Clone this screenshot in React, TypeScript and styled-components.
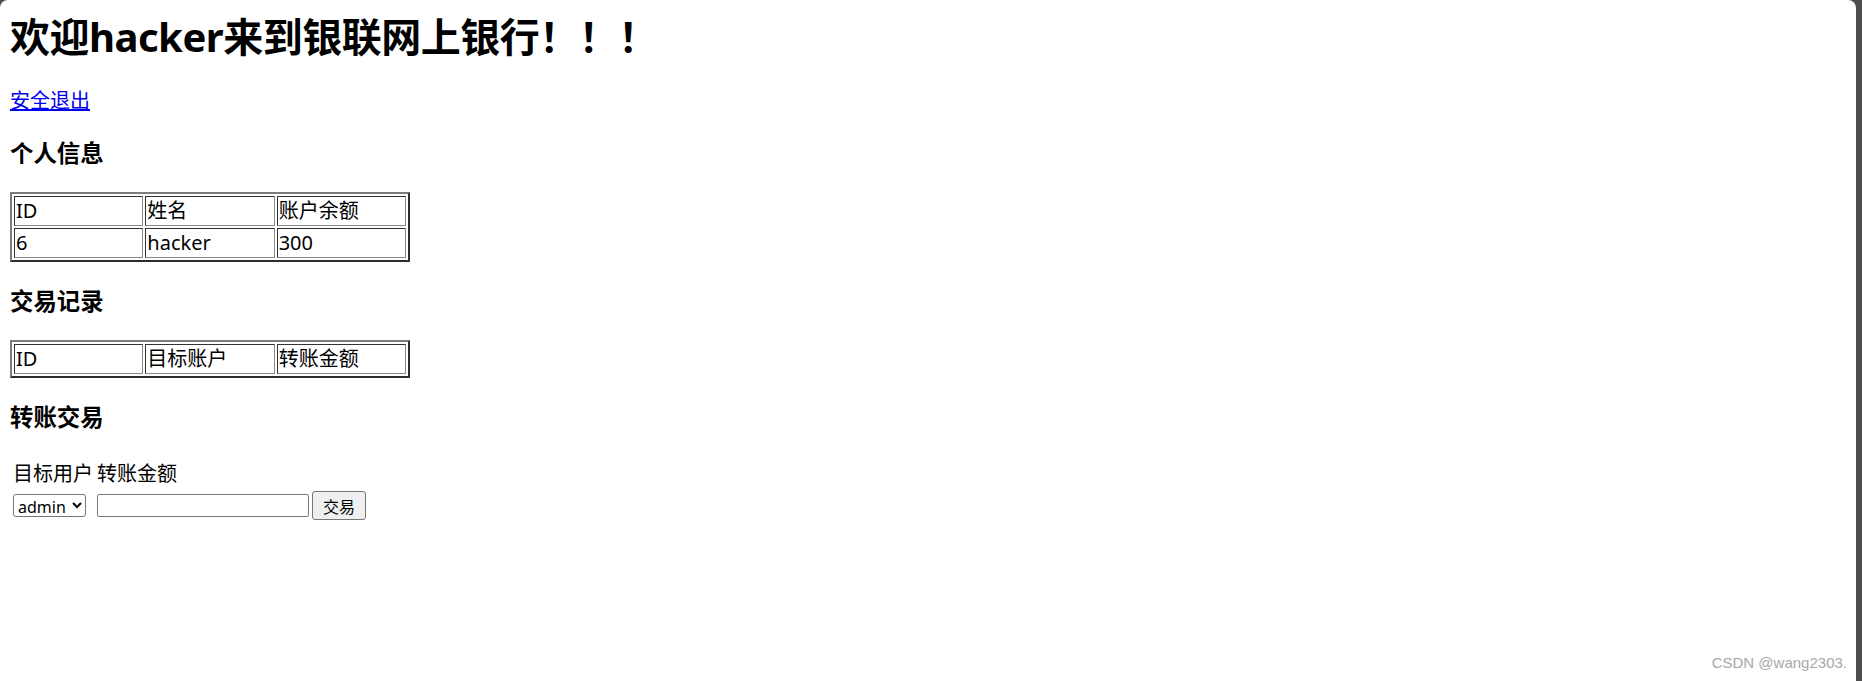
import React from "react";
import styled, { createGlobalStyle } from "styled-components";

const GlobalStyle = createGlobalStyle`
  html, body {
    margin: 0;
    padding: 0;
    height: 100%;
  }
  body {
    background: #4d4d4d;
    font-family: "Noto Sans", "Noto Sans CJK SC", sans-serif;
    color: #000;
  }
`;

const Frame = styled.div`
  position: relative;
  box-sizing: border-box;
  width: calc(100% - 6px);
  height: 100vh;
  padding: 1px 10px 0;
  background: #fff;
  border-radius: 8px 8px 0 0;
  overflow: hidden;
`;

const Title = styled.h1`
  margin: 10px 0 0;
  font-size: 40px;
  line-height: 52px;
  font-weight: 700;
  letter-spacing: -0.5px;
`;

const LogoutLine = styled.p`
  margin: 25px 0 0;
  font-size: 20px;
  line-height: 26px;
`;

const LogoutLink = styled.a`
  color: #0000ee;
  text-decoration: underline;
`;

const SectionTitle = styled.h3`
  margin: 23.5px 0;
  font-size: 23.4px;
  line-height: 31px;
  font-weight: 700;
`;

const DataTable = styled.table`
  width: 400px;
  table-layout: fixed;
  border-collapse: separate;
  border-spacing: 2px;
  border: 2px solid;
  border-color: #7c7c7c #2e2e2e #2e2e2e #7c7c7c;
`;

const DataCell = styled.td`
  border: 1px solid;
  border-color: #333 #8a8a8a #8a8a8a #333;
  padding: 1px;
  font-size: 20px;
  line-height: 26px;
  white-space: nowrap;
`;

const TransferForm = styled.form`
  padding-top: 2px;
`;

const FormTable = styled.table`
  border-collapse: separate;
  border-spacing: 2px;
`;

const FormCell = styled.td<{ $tight?: boolean }>`
  padding: ${(p) => (p.$tight ? "1px 1px 1px 0" : "1px")};
  font-size: 20px;
  line-height: 26px;
  vertical-align: middle;
  white-space: nowrap;
`;

const UserSelect = styled.select`
  box-sizing: border-box;
  width: 73px;
  height: 23px;
  margin: 0;
  font-family: "Noto Sans", sans-serif;
  font-size: 16px;
  border: 1px solid #767676;
  border-radius: 3px;
  background: #fff;
  color: #000;
  display: block;
`;

const AmountInput = styled.input`
  box-sizing: border-box;
  width: 212px;
  height: 23px;
  margin: 0;
  border: 1px solid #767676;
  border-radius: 2px;
  font-size: 16px;
  display: block;
`;

const SubmitButton = styled.button`
  box-sizing: border-box;
  width: 54px;
  height: 29px;
  padding: 0;
  margin: 0;
  font-family: "Noto Sans CJK SC", sans-serif;
  font-size: 16px;
  color: #000;
  background: #efefef;
  border: 1px solid #767676;
  border-radius: 3px;
  display: block;
`;

const Watermark = styled.div`
  position: absolute;
  right: 9px;
  bottom: 9px;
  font-family: "Liberation Sans", Arial, sans-serif;
  font-size: 15px;
  line-height: 18px;
  color: #a8a8a8;
`;

const profile = { id: 6, name: "hacker", balance: 300 };

export default function App() {
  return (
    <>
      <GlobalStyle />
      <Frame>
        <Title>欢迎hacker来到银联网上银行！！！</Title>
        <LogoutLine>
          <LogoutLink href="#">安全退出</LogoutLink>
        </LogoutLine>

        <SectionTitle>个人信息</SectionTitle>
        <DataTable>
          <tbody>
            <tr>
              <DataCell>ID</DataCell>
              <DataCell>姓名</DataCell>
              <DataCell>账户余额</DataCell>
            </tr>
            <tr>
              <DataCell>{profile.id}</DataCell>
              <DataCell>{profile.name}</DataCell>
              <DataCell>{profile.balance}</DataCell>
            </tr>
          </tbody>
        </DataTable>

        <SectionTitle>交易记录</SectionTitle>
        <DataTable>
          <tbody>
            <tr>
              <DataCell>ID</DataCell>
              <DataCell>目标账户</DataCell>
              <DataCell>转账金额</DataCell>
            </tr>
          </tbody>
        </DataTable>

        <SectionTitle>转账交易</SectionTitle>
        <TransferForm onSubmit={(e) => e.preventDefault()}>
          <FormTable>
            <tbody>
              <tr>
                <FormCell>目标用户</FormCell>
                <FormCell>转账金额</FormCell>
              </tr>
              <tr>
                <FormCell>
                  <UserSelect defaultValue="admin">
                    <option value="admin">admin</option>
                  </UserSelect>
                </FormCell>
                <FormCell>
                  <AmountInput type="text" />
                </FormCell>
                <FormCell $tight>
                  <SubmitButton type="submit">交易</SubmitButton>
                </FormCell>
              </tr>
            </tbody>
          </FormTable>
        </TransferForm>

        <Watermark>CSDN @wang2303.</Watermark>
      </Frame>
    </>
  );
}
